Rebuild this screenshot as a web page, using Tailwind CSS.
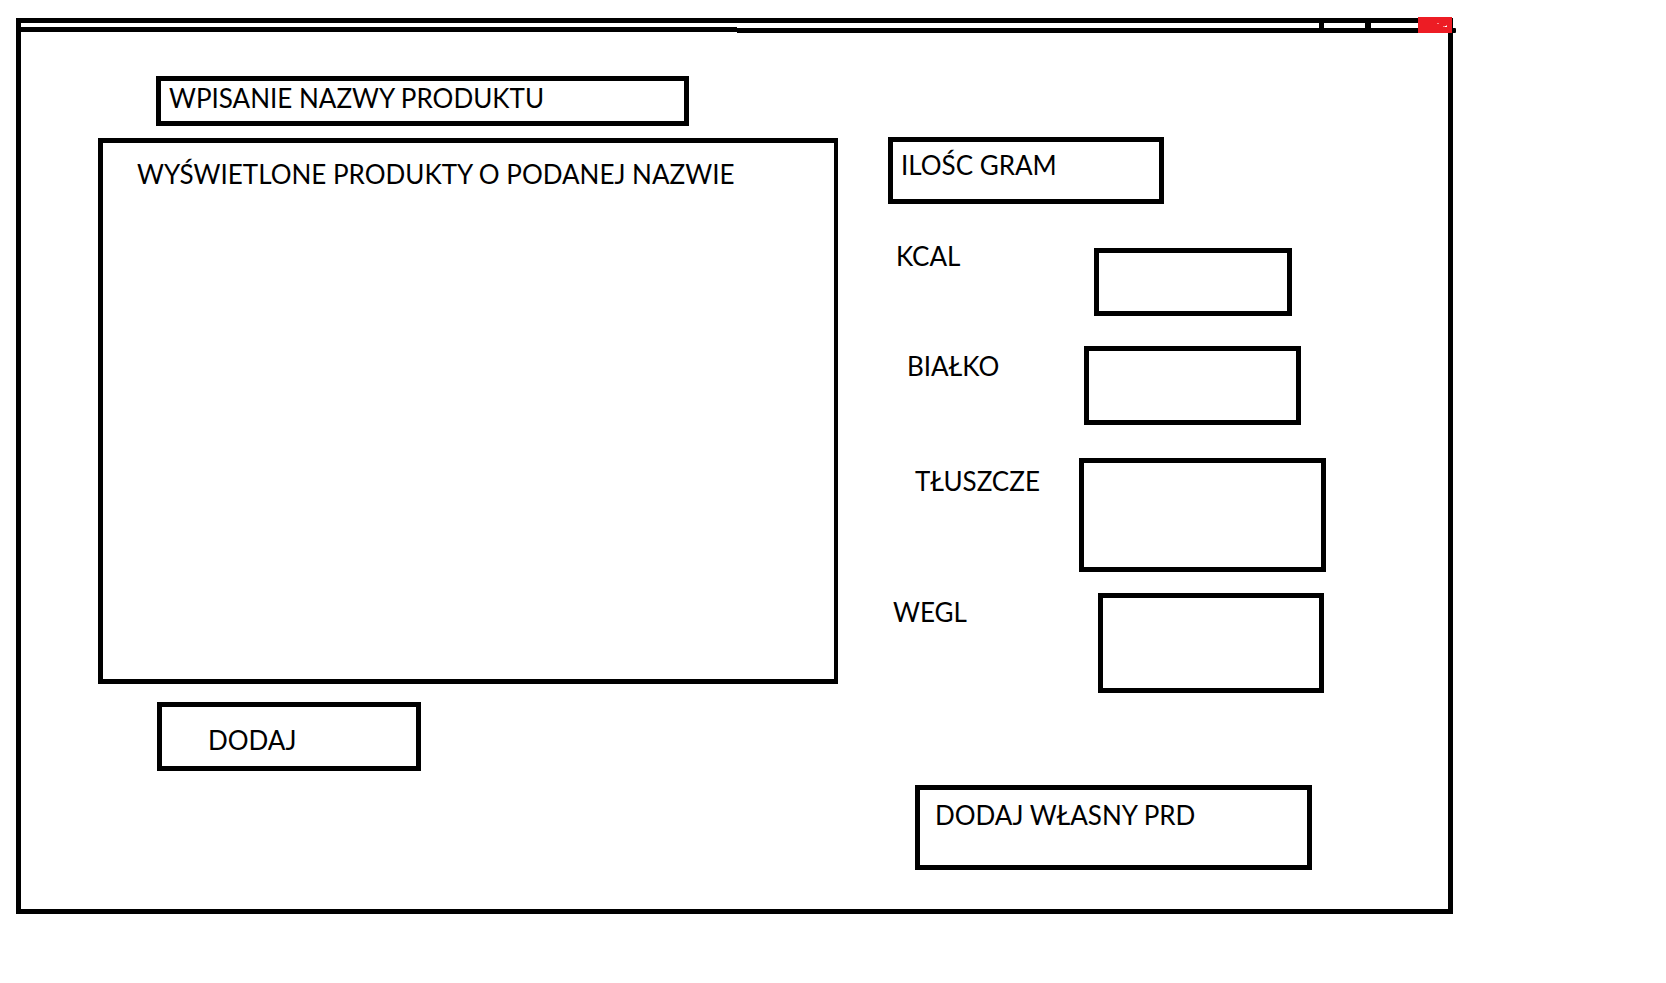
<!DOCTYPE html>
<html lang="pl">
<head>
<meta charset="utf-8">
<meta name="viewport" content="width=device-width, initial-scale=1">
<title>Produkty</title>
<script src="https://cdn.jsdelivr.net/npm/@tailwindcss/browser@4"></script>
</head>
<body class="bg-white text-black font-[Lato,sans-serif] text-[26px] leading-[34px]">
<div class="ml-4 mr-[213px] mt-[18px] border-5 border-black">
  <header class="grid grid-cols-[716fr_711fr] items-start">
    <div class="h-[9px] border-b-5 border-black"></div>
    <div class="relative flex h-[10px] justify-end border-b-5 border-black">
      <button type="button" aria-label="Minimalizuj" class="w-[46px] border-l-5 border-black"></button>
      <button type="button" aria-label="Maksymalizuj" class="w-[53px] border-l-6 border-black"></button>
      <span class="w-[30px]"></span>
      <span class="absolute -right-2 top-[5px] h-[5px] w-2 rounded-r-[1px] bg-black"></span>
      <button type="button" aria-label="Zamknij" class="absolute -right-1 -top-[6px] h-4 w-[34px] bg-[#ed1c24]">
        <svg viewBox="0 0 34 16" class="h-4 w-[34px]" shape-rendering="crispEdges"><path fill="#f58e92" d="M19 6h2v1h-2zM25 9h2v1h-2zM28 8h1v1h-1z"/><path fill="#fff" d="M27 9h2v1h-2z"/></svg>
      </button>
    </div>
  </header>
  <main class="grid grid-cols-[740fr_438fr] gap-[50px] pl-[77px] pr-[122px] pt-[43px] pb-[39px]">
    <section class="flex flex-col">
      <input type="text" aria-label="Nazwa produktu" value="WPISANIE NAZWY PRODUKTU" class="ml-[58px] mr-[149px] h-[50px] border-5 border-black pl-2 pb-[6px]">
      <div class="mt-3 h-[546px] border-5 border-r-4 border-black pl-[34px] pt-[14px]">
        <h1>WYŚWIETLONE PRODUKTY O PODANEJ NAZWIE</h1>
      </div>
      <button type="button" class="ml-[59px] mt-[18px] flex h-[69px] w-[264px] items-start border-5 border-black pl-[46px] pt-4">DODAJ</button>
    </section>
    <form class="mt-[61px] flex flex-col">
      <input type="text" aria-label="Ilość gram" value="ILOŚC GRAM" class="h-[67px] w-[276px] border-5 border-black pl-2 pt-[6px] pb-[17px]">
      <div class="mt-[35px] flex justify-between pl-2 pr-[34px]">
        <label for="kcal">KCAL</label>
        <input id="kcal" type="text" class="mt-[9px] h-[68px] w-[198px] border-5 border-black px-2">
      </div>
      <div class="mt-[30px] flex justify-between pl-[19px] pr-[25px]">
        <label for="bialko" class="pt-[3px]">BIAŁKO</label>
        <input id="bialko" type="text" class="h-[79px] w-[217px] border-5 border-black px-2">
      </div>
      <div class="mt-[33px] flex justify-between pl-[27px]">
        <label for="tluszcze" class="pt-[6px]">TŁUSZCZE</label>
        <input id="tluszcze" type="text" class="h-[114px] w-[247px] border-5 border-black px-2">
      </div>
      <div class="mt-[21px] flex justify-between pl-[5px] pr-[2px]">
        <label for="wegl" class="pt-[2px]">WEGL</label>
        <input id="wegl" type="text" class="h-[100px] w-[226px] border-5 border-black px-2">
      </div>
      <button type="button" class="ml-[27px] mr-[14px] mt-[92px] flex h-[85px] items-start border-5 border-black pl-[15px] pt-2">DODAJ WŁASNY PRD</button>
    </form>
  </main>
</div>
</body>
</html>
